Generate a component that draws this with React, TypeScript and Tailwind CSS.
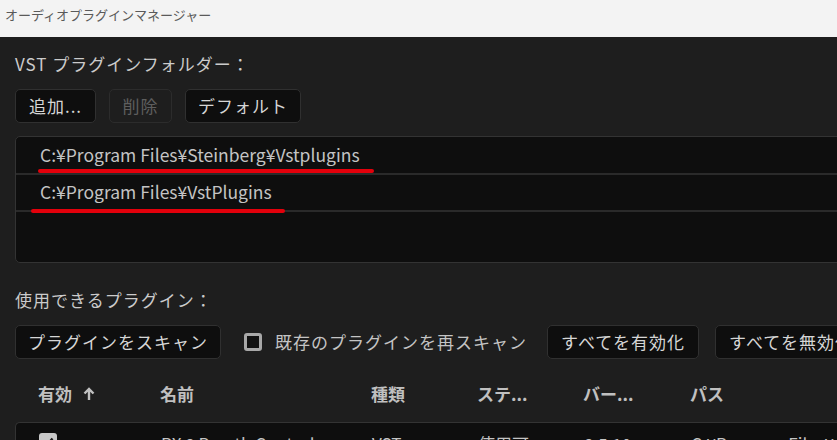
import React from 'react';

const font = { fontFamily: '"Noto Sans CJK JP", "Noto Sans", sans-serif' };

const Btn: React.FC<{ label: string; disabled?: boolean; className?: string }> = ({ label, disabled, className }) => (
  <div
    className={
      'h-[34px] flex items-center justify-center rounded-[5px] border text-[17px] tracking-[1px] ' +
      (disabled
        ? 'border-[#2c2c2c] bg-[#1e1e1e] text-[#5e5e5e] '
        : 'border-[#303030] bg-[#0e0e0e] text-[#d6d6d6] ') +
      (className ?? '')
    }
  >
    {label}
  </div>
);

const columns = [
  { label: '有効', w: 'w-[122px]' },
  { label: '名前', w: 'w-[211px]' },
  { label: '種類', w: 'w-[106px]' },
  { label: 'ステ...', w: 'w-[106px]' },
  { label: 'バー...', w: 'w-[107px]' },
  { label: 'パス', w: 'w-[200px]' },
];

export default function App() {
  return (
    <div className="w-[837px] h-[440px] overflow-hidden bg-[#1e1e1e]" style={font}>
      <div className="h-[37px] bg-[#f3f3f3] pl-[5px] pt-[5px] text-[13px] text-[#5a5a5a]">
        オーディオプラグインマネージャー
      </div>

      <div className="w-[900px] pl-[15px]">
        <div className="mt-[15px] text-[17px] tracking-[1px] text-[#cbcbcb] leading-[24px]">VST プラグインフォルダー：</div>

        <div className="mt-[13px] flex gap-[13px]">
          <Btn label="追加..." className="w-[81px]" />
          <Btn label="削除" disabled className="w-[63px]" />
          <Btn label="デフォルト" className="w-[116px]" />
        </div>

        <div className="relative mt-[13px] h-[127px] rounded-l-[5px] border border-[#333] bg-[#0e0e0e] text-[17.5px] text-[#c4c4c4]">
          <div className="h-[38px] flex items-center pl-[24px] border-b-2 border-[#2a2a2a]">
            C:¥Program Files¥Steinberg¥Vstplugins
          </div>
          <div className="h-[37px] flex items-center pl-[24px] border-b-2 border-[#2a2a2a]">
            C:¥Program Files¥VstPlugins
          </div>
          <div className="absolute left-[22px] top-[32px] w-[336px] h-[4px] rounded-full bg-[#e3000b]" />
          <div className="absolute left-[15px] top-[72px] w-[254px] h-[4px] rounded-full bg-[#e3000b]" />
        </div>

        <div className="mt-[25px] text-[17px] tracking-[1px] text-[#cbcbcb] leading-[24px]">使用できるプラグイン：</div>

        <div className="mt-[13px] flex items-center">
          <Btn label="プラグインをスキャン" className="w-[206px]" />
          <div className="ml-[23px] w-[18px] h-[18px] rounded-[3px] border-[3px] border-[#a8a8a8] bg-[#111]" />
          <span className="ml-[13px] text-[17px] tracking-[1px] text-[#c4c4c4]">既存のプラグインを再スキャン</span>
          <Btn label="すべてを有効化" className="ml-[20px] w-[152px]" />
          <Btn label="すべてを無効化" className="ml-[16px] w-[152px]" />
        </div>

        <div className="mt-[17px] flex h-[36px] items-center pl-[23px] text-[17px] font-bold text-[#c0c0c0]">
          {columns.map((c, i) => (
            <div key={c.label} className={c.w + ' flex items-center'}>
              {c.label}
              {i === 0 && (
                <svg className="ml-[11px]" width="12" height="14" viewBox="0 0 12 14">
                  <path d="M6 13V2M1.5 6.5 6 2l4.5 4.5" stroke="#c0c0c0" strokeWidth="2.4" fill="none" />
                </svg>
              )}
            </div>
          ))}
        </div>

        <div className="mt-[10px] h-[40px] rounded-tl-[5px] border-t border-l border-[#333] bg-[#0e0e0e] flex items-start pt-[8px] pl-[23px] text-[17px] text-[#c4c4c4]">
          <div className="w-[122px] pt-[2px]">
            <div className="w-[18px] h-[18px] rounded-[3px] bg-[#c8c8c8] flex items-center justify-center">
              <svg width="14" height="14" viewBox="0 0 14 14">
                <path d="M2.5 7.5 5.5 10.5 11.5 3.5" stroke="#1a1a1a" strokeWidth="2.4" fill="none" />
              </svg>
            </div>
          </div>
          <div className="w-[211px]">RX 8 Breath Control</div>
          <div className="w-[106px]">VST</div>
          <div className="w-[106px]">使用可</div>
          <div className="w-[107px]">8.5.10</div>
          <div className="w-[200px] whitespace-nowrap">C:¥Program Files¥</div>
        </div>
      </div>
    </div>
  );
}
